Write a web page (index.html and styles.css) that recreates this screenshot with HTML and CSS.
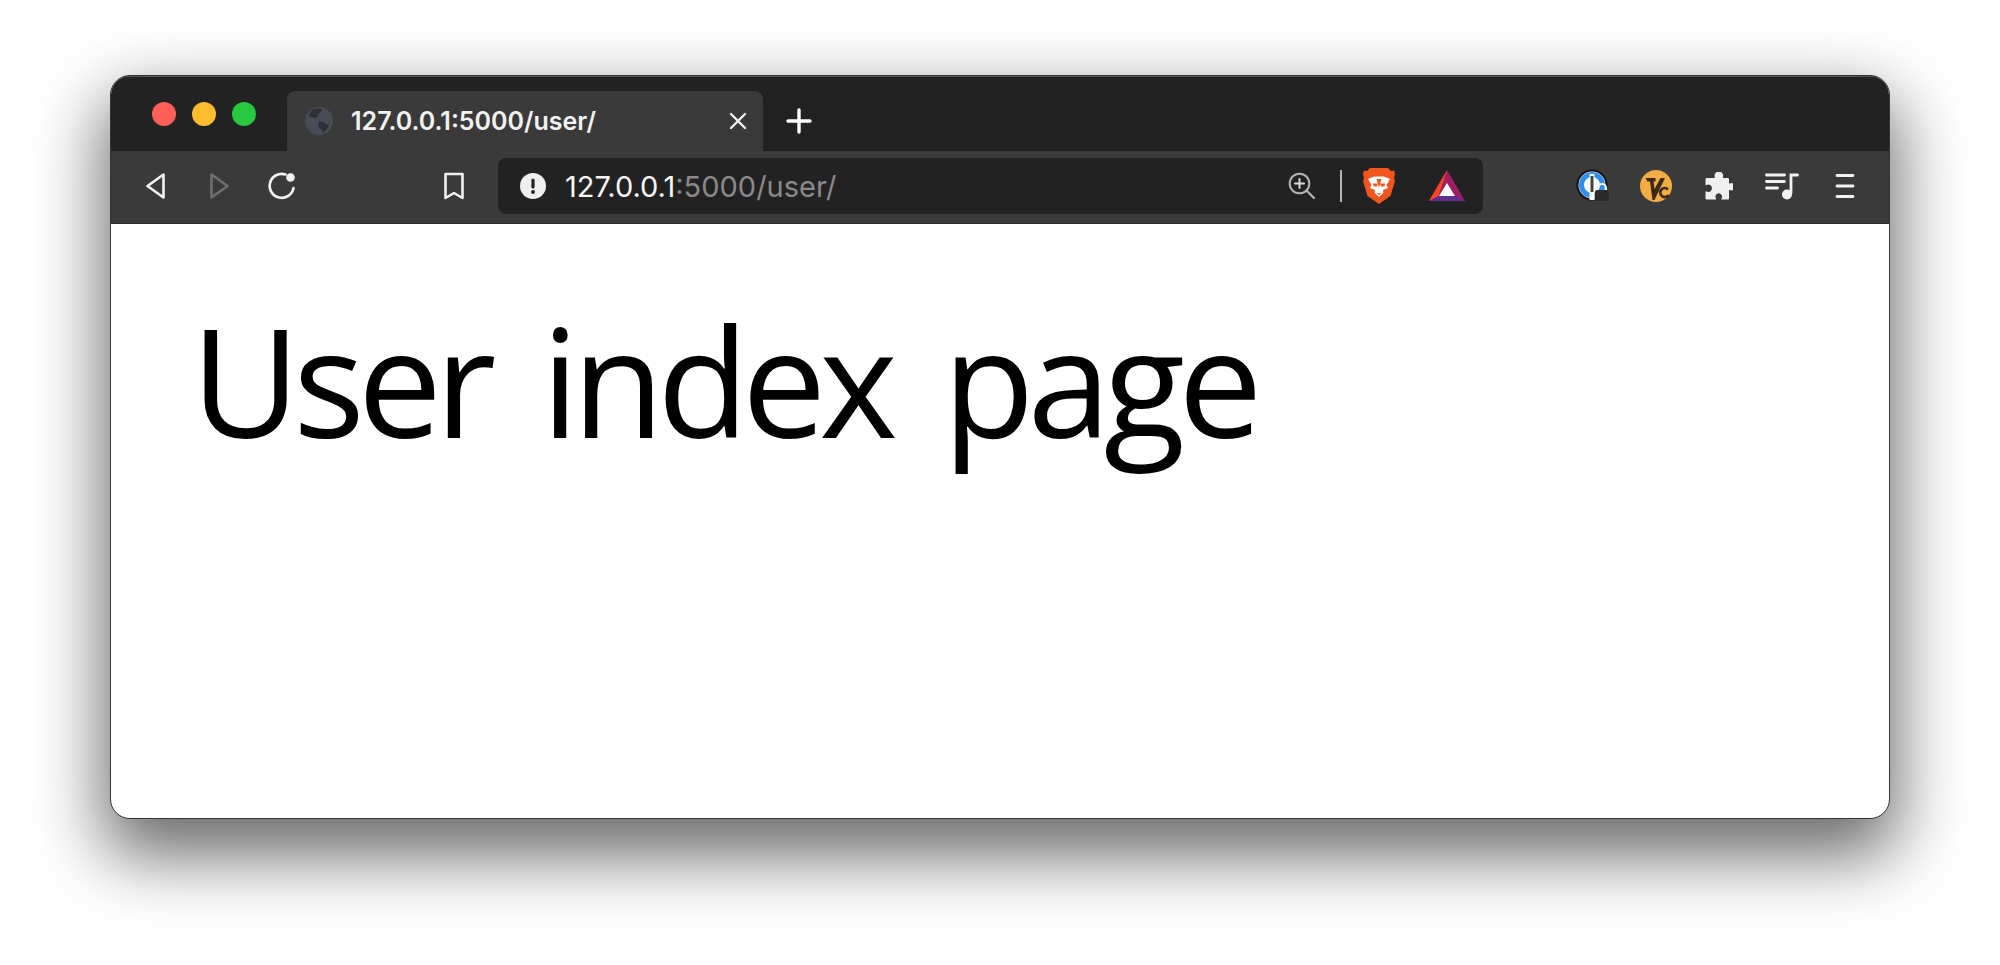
FILE: index.html
```html
<!DOCTYPE html>
<html lang="en">
<head>
    <meta charset="UTF-8">
    <title>User index page</title>
    <link rel="stylesheet" href="styles.css">
</head>
<body>
    <div class="window">
        <div class="tabstrip">
            <div class="lights">
                <span class="light red"></span>
                <span class="light yellow"></span>
                <span class="light green"></span>
            </div>
            <div class="tab">
                <svg class="globe" width="28" height="28" viewBox="0 0 28 28">
                    <circle cx="14" cy="14" r="14" fill="#4a4c55"/>
                    <path d="M8 2.500c3-1 7-1.500 9 0l-1.500 3.500-3 1 .5 3-3.500 1.500-3-2-2.500 1C4 7 5.500 4 8 2.500zM14 14l5 1 2 2.500 3-.5c-.5 4-3 7-6 8.500l-1.500-3-3.500-2.500z" fill="#2f3036"/>
                </svg>
                <span class="tab-title">127.0.0.1:5000/user/</span>
                <svg class="tab-close" width="18" height="18" viewBox="0 0 18 18">
                    <path d="M2 2l14 14M16 2L2 16" stroke="#f2f2f2" stroke-width="2.400" stroke-linecap="round"/>
                </svg>
            </div>
            <svg class="new-tab" width="26" height="26" viewBox="0 0 26 26">
                <path d="M13 2v22M2 13h22" stroke="#fff" stroke-width="3.400" stroke-linecap="round"/>
            </svg>
        </div>

        <div class="toolbar">
            <div class="btn">
                <svg width="22" height="28" viewBox="0 0 22 28"><path d="M18.500 2.500v23L2.500 14z" fill="none" stroke="#f2f2f2" stroke-width="2.600" stroke-linejoin="round"/></svg>
            </div>
            <div class="btn">
                <svg width="22" height="28" viewBox="0 0 22 28"><path d="M3.500 2.500v23l16-11.500z" fill="none" stroke="#6e6e6e" stroke-width="2.600" stroke-linejoin="round"/></svg>
            </div>
            <div class="btn">
                <svg width="30" height="30" viewBox="0 0 30 30"><path d="M18.500 3.500A12 12 0 1 0 26.500 17" fill="none" stroke="#f2f2f2" stroke-width="2.600" stroke-linecap="round"/><circle cx="23.500" cy="6.500" r="4.300" fill="#f2f2f2"/></svg>
            </div>
            <div class="btn bookmark">
                <svg width="22" height="28" viewBox="0 0 22 28"><path d="M2.500 2h17v24L11 21 2.500 26z" fill="none" stroke="#f2f2f2" stroke-width="2.600" stroke-linejoin="round"/></svg>
            </div>

            <div class="urlbar">
                <svg class="info" width="26" height="26" viewBox="0 0 26 26">
                    <circle cx="13" cy="13" r="13" fill="#efefef"/>
                    <rect x="11.400" y="5.500" width="3.200" height="10" rx="1.600" fill="#222"/>
                    <circle cx="13" cy="19" r="1.900" fill="#222"/>
                </svg>
                <span class="url"><span class="url-host">127.0.0.1</span>:5000/user/</span>
                <svg class="zoom-icon" width="28" height="28" viewBox="0 0 28 28">
                    <circle cx="11.500" cy="11.500" r="9.800" fill="none" stroke="#b4b4b4" stroke-width="2"/>
                    <path d="M18.500 18.500l7.500 7.500" stroke="#b4b4b4" stroke-width="2.200" stroke-linecap="round"/>
                    <path d="M11.500 7v9M7 11.500h9" stroke="#d8d8d8" stroke-width="2" stroke-linecap="round"/>
                </svg>
                <span class="url-sep"></span>
                <svg class="brave" width="32" height="36" viewBox="0 0 32 36">
                    <path d="M7 0h18l3 3 3-.5L32 6l-1 4 1 3-4.500 15L16 36 4.500 28 0 13l1-3-1-4 1-3.500L4 3z" fill="#f1561f"/>
                    <path d="M5 11l6-2.500h10l6 2.500-3.500 6 1.500 3-5 2 .5 2.500L16 29l-4.500-4.500.5-2.500-5-2 1.500-3z" fill="#fff"/>
                    <path d="M9.500 15.500h5.500l-1 3h-3zM17 15.500h5.500l-1.500 3h-3zM13.500 11h5l-2.500 9zM13 24.500l3 1 3-1-3 2.500z" fill="#f1561f"/>
                </svg>
                <svg class="bat" width="36" height="32" viewBox="0 0 36 32">
                    <path d="M18 0L0 31h36z" fill="#9e1f63"/>
                    <path d="M18 0L0 31l9-4z" fill="#ff4724"/>
                    <path d="M0 31h36l-9-5H9z" fill="#662d91"/>
                    <path d="M18 13l-8 13h16z" fill="#fff"/>
                </svg>
            </div>

            <div class="btn">
                <svg width="34" height="34" viewBox="0 0 34 34">
                    <circle cx="16" cy="16" r="15.500" fill="#111"/>
                    <circle cx="16" cy="16" r="13.500" fill="#fff"/>
                    <circle cx="16" cy="16" r="10.500" fill="none" stroke="#2f8ff0" stroke-width="5"/>
                    <rect x="13.500" y="5" width="5" height="26" fill="#fff"/>
                    <rect x="14.500" y="7" width="3" height="16" fill="#444"/>
                    <path d="M22 21v-2a4 4 0 0 1 8 0v2" fill="none" stroke="#f2f2f2" stroke-width="2"/>
                    <rect x="19" y="21" width="14" height="11" rx="2" fill="#2b2b2b"/>
                </svg>
            </div>
            <div class="btn">
                <svg width="32" height="32" viewBox="0 0 32 32">
                    <circle cx="16" cy="16" r="16" fill="#f4ac45"/>
                    <path d="M5.500 8h10v3.500h-2l1 7.500 6-11h4.500L14.500 30h-2L10 11.500H7.500z" fill="#3a2a16"/>
                    <path d="M28 19.500a4.500 4.500 0 1 0 .5 5.500" fill="none" stroke="#3a2a16" stroke-width="2.600"/>
                </svg>
            </div>
            <div class="btn">
                <svg width="28" height="28" viewBox="0 0 28 28">
                    <path d="M2 6h7.500c.5 0 .5-.5.200-1.200A4.300 4.300 0 1 1 18 5c-.3.500-.2 1 .3 1h4.200c1 0 1.500.6 1.500 1.500V11c0 .5.500.8 1 .5a3.600 3.600 0 1 1 0 6.500c-.5-.3-1 0-1 .5V26c0 1-.5 1.500-1.500 1.500H17c-.6 0-.8-.5-.5-1a3.300 3.300 0 1 0-5.500 0c.3.500.1 1-.5 1H2c-1 0-1.500-.5-1.500-1.500v-6c0-.6.500-.8 1-.5a3.700 3.700 0 1 0 0-6.500c-.5.300-1 .1-1-.5V7.500C.5 6.500 1 6 2 6z" fill="#efefef"/>
                </svg>
            </div>
            <div class="btn">
                <svg width="34" height="28" viewBox="0 0 34 28">
                    <path d="M1.500 3h18M1.500 9.500h18M1.500 16h11" stroke="#f2f2f2" stroke-width="2.800" stroke-linecap="round"/>
                    <path d="M26 21V3h6.500" fill="none" stroke="#f2f2f2" stroke-width="2.800" stroke-linecap="round"/>
                    <circle cx="22" cy="22.500" r="5" fill="#f2f2f2"/>
                </svg>
            </div>
            <div class="btn">
                <svg width="20" height="26" viewBox="0 0 20 26">
                    <path d="M2 2.500h16M2 13h16M2 23.500h16" stroke="#f2f2f2" stroke-width="2.800" stroke-linecap="round"/>
                </svg>
            </div>
        </div>

        <div class="page">
            <h1>User index page</h1>
        </div>
    </div>
</body>
</html>
```

FILE: styles.css
```css
html, body {
    height: 100%;
}
body {
    margin: 0;
    padding: 75px 110px 0;
    box-sizing: border-box;
    background-color: #fff;
    overflow: hidden;
}
.window {
    height: 744px;
    display: flex;
    flex-direction: column;
    border-radius: 20px;
    overflow: hidden;
    background-color: #fff;
    border: 1px solid #333;
    box-sizing: border-box;
    box-shadow: 0 30px 70px 6px rgba(0, 0, 0, 0.6);
}
.tabstrip {
    height: 75px;
    flex-shrink: 0;
    display: flex;
    align-items: flex-start;
    background-color: #222;
    border-top: 1px solid #555;
    box-sizing: border-box;
}
.lights {
    display: flex;
    gap: 16px;
    margin: 25px 0 0 41px;
}
.light {
    width: 24px;
    height: 24px;
    border-radius: 50%;
}
.red { background-color: #ff5f57; }
.yellow { background-color: #febc2e; }
.green { background-color: #28c840; }
.tab {
    width: 476px;
    height: 60px;
    margin: 14px 0 0 31px;
    padding: 0 16px 0 18px;
    box-sizing: border-box;
    display: flex;
    align-items: center;
    background-color: #3a3a3a;
    border-radius: 8px 8px 0 0;
    font-family: Inter, "Liberation Sans", sans-serif;
}
.tab-title {
    margin-left: 18px;
    flex: 1;
    color: #f2f2f2;
    font-size: 25px;
    font-weight: 600;
}
.new-tab {
    margin: 31px 0 0 23px;
}
.toolbar {
    height: 73px;
    flex-shrink: 0;
    display: flex;
    align-items: center;
    padding: 0 12.5px 2px 13px;
    background-color: #3a3a3a;
    border-bottom: 1px solid #2b2b2b;
    box-sizing: border-box;
}
.btn {
    width: 63px;
    height: 40px;
    flex-shrink: 0;
    display: flex;
    align-items: center;
    justify-content: center;
}
.bookmark {
    margin-left: 109.5px;
}
.urlbar {
    flex: 1;
    height: 56px;
    margin: 0 78.5px 0 12.5px;
    padding: 0 18px 0 22px;
    display: flex;
    align-items: center;
    background-color: #222;
    border-radius: 8px;
    font-family: Inter, "Liberation Sans", sans-serif;
}
.url {
    flex: 1;
    margin-left: 19px;
    color: #8a8a8a;
    font-size: 29px;
}
.url-host {
    color: #f7f7f7;
}
.url-sep {
    width: 2px;
    height: 32px;
    margin: 0 21px 0 24px;
    background-color: #b4b4b4;
}
.bat {
    margin-left: 34.5px;
}
.page {
    flex: 1;
    padding: 0 0 0 80px;
}
h1 {
    margin: 54px 0 0;
    color: #000;
    font-family: "Open Sans", sans-serif;
    font-size: 150px;
    font-weight: 400;
    letter-spacing: -7px;
    word-spacing: 20px;
    line-height: 1.36;
}
```
